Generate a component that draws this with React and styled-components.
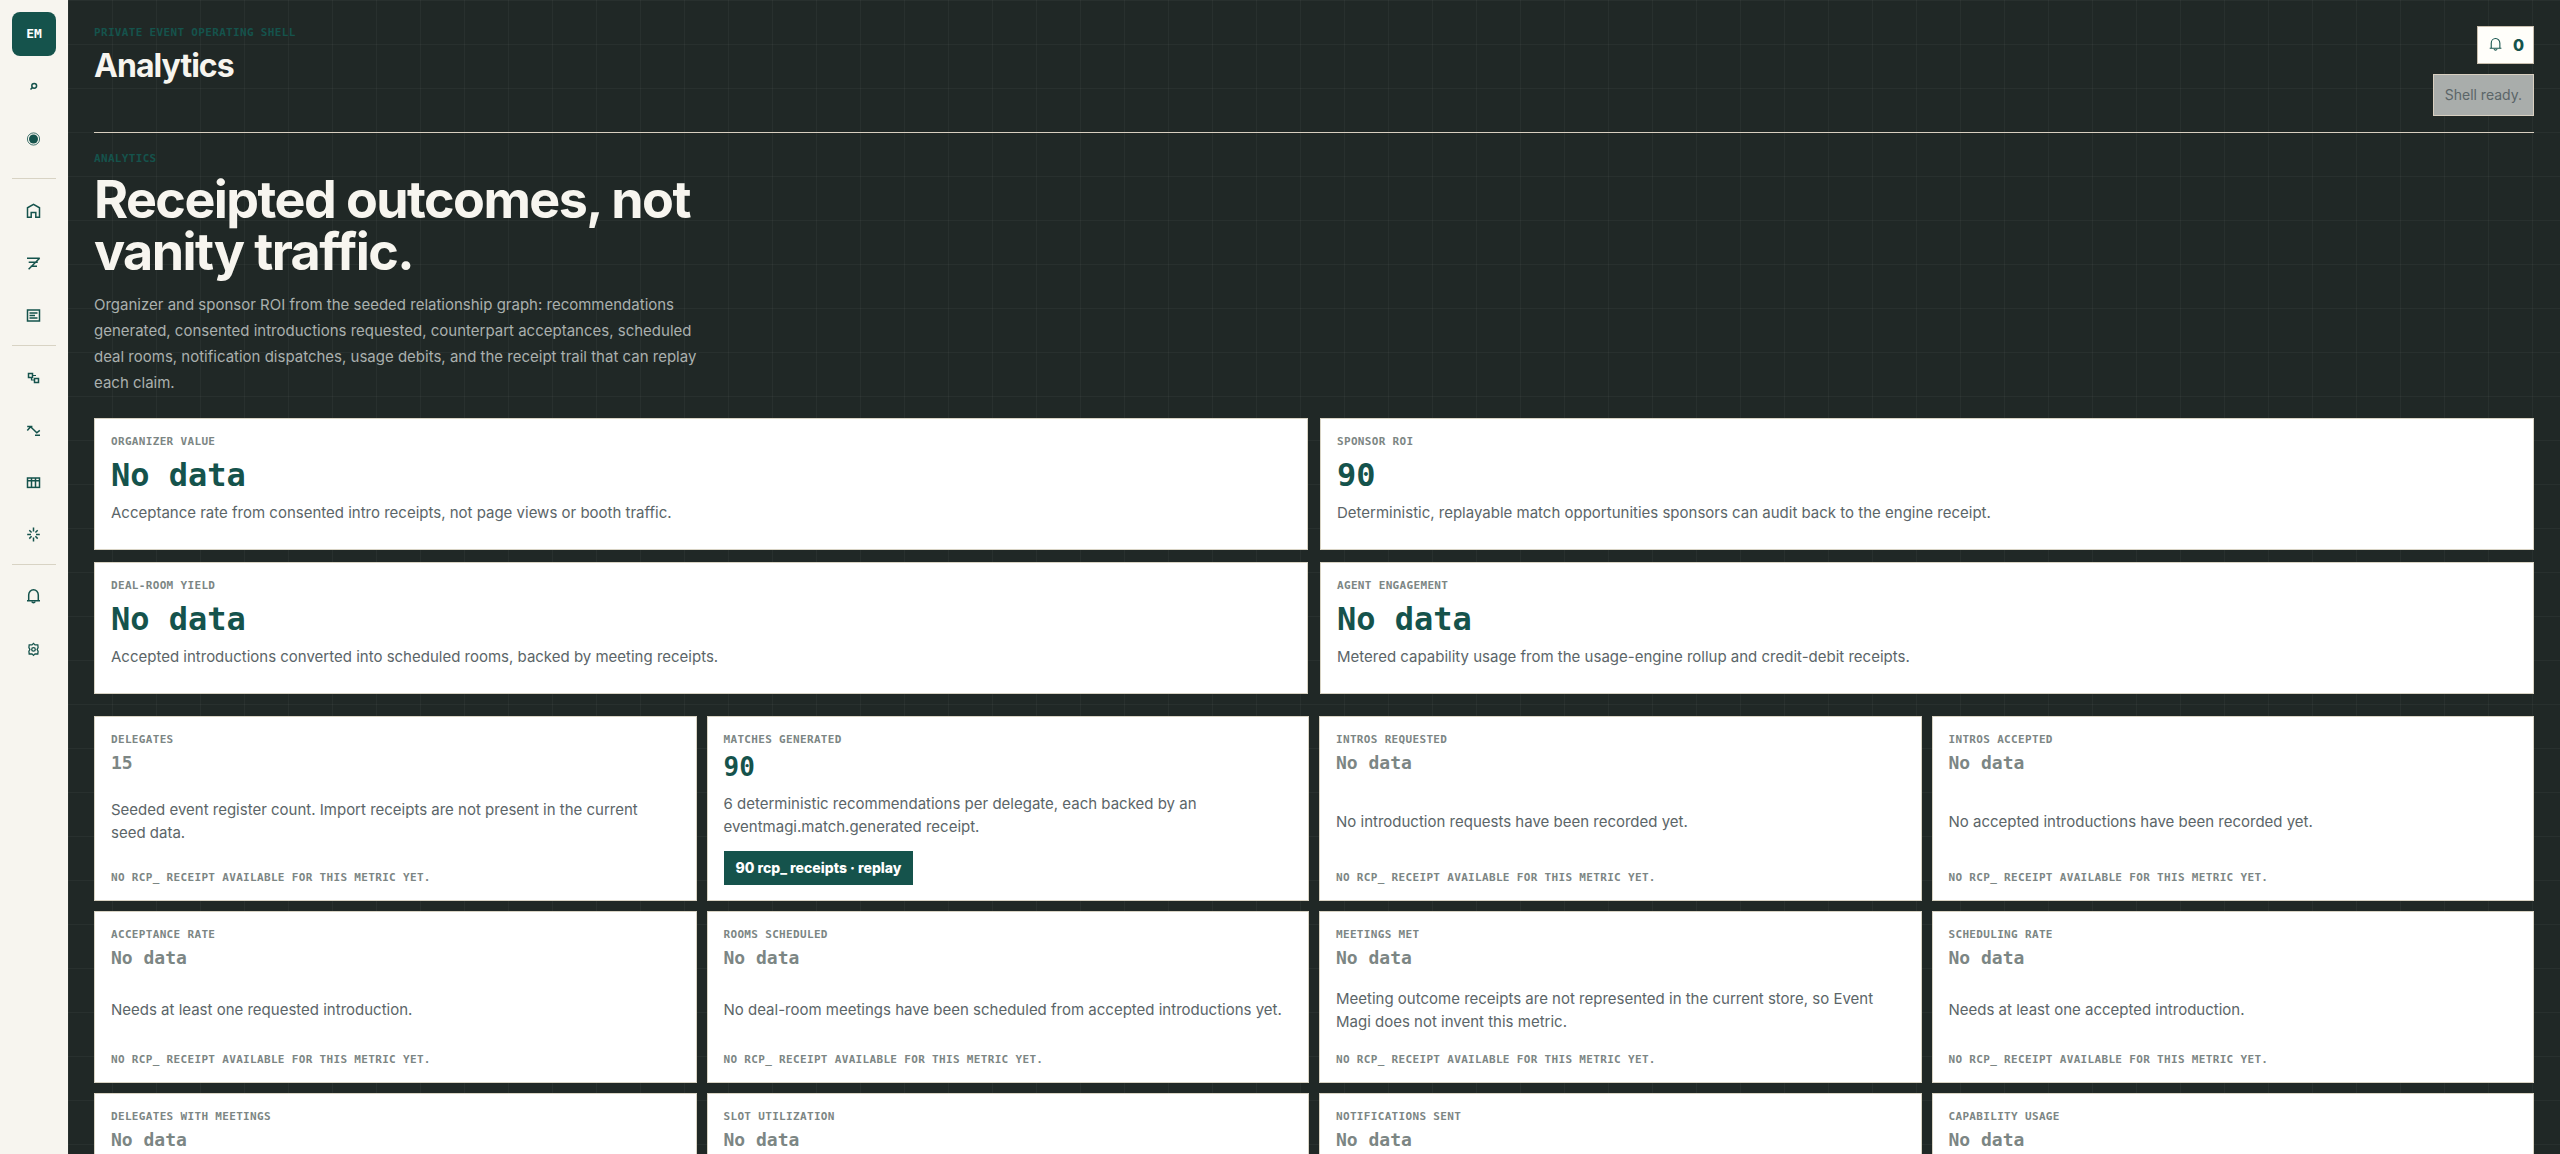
import React from "react";
import styled, { createGlobalStyle } from "styled-components";

const GlobalStyle = createGlobalStyle`
  * {
    box-sizing: border-box;
  }
  body {
    margin: 0;
    background: #202826;
    font-family: Inter, "Liberation Sans", sans-serif;
  }
  h1, h2, h3, p {
    margin: 0;
  }
`;

const navGroups = [
  [
    { label: "Search", icon: "search" },
    { label: "Status", icon: "status" },
  ],
  [
    { label: "Home", icon: "home" },
    { label: "Flow", icon: "flow" },
    { label: "Register", icon: "list" },
  ],
  [
    { label: "Graph", icon: "graph" },
    { label: "Matches", icon: "wave" },
    { label: "Rooms", icon: "table" },
    { label: "Agents", icon: "burst" },
  ],
  [
    { label: "Notifications", icon: "bell" },
    { label: "Settings", icon: "gear" },
  ],
];

const highlights = [
  {
    label: "Organizer value",
    value: "No data",
    text: "Acceptance rate from consented intro receipts, not page views or booth traffic.",
  },
  {
    label: "Sponsor ROI",
    value: "90",
    text: "Deterministic, replayable match opportunities sponsors can audit back to the engine receipt.",
  },
  {
    label: "Deal-room yield",
    value: "No data",
    text: "Accepted introductions converted into scheduled rooms, backed by meeting receipts.",
  },
  {
    label: "Agent engagement",
    value: "No data",
    text: "Metered capability usage from the usage-engine rollup and credit-debit receipts.",
  },
];

const metrics = [
  {
    label: "Delegates",
    value: "15",
    text: "Seeded event register count. Import receipts are not present in the current seed data.",
  },
  {
    label: "Matches generated",
    value: "90",
    text: "6 deterministic recommendations per delegate, each backed by an eventmagi.match.generated receipt.",
    receipts: "90 rcp_ receipts · replay",
  },
  {
    label: "Intros requested",
    value: "No data",
    text: "No introduction requests have been recorded yet.",
  },
  {
    label: "Intros accepted",
    value: "No data",
    text: "No accepted introductions have been recorded yet.",
  },
  {
    label: "Acceptance rate",
    value: "No data",
    text: "Needs at least one requested introduction.",
  },
  {
    label: "Rooms scheduled",
    value: "No data",
    text: "No deal-room meetings have been scheduled from accepted introductions yet.",
  },
  {
    label: "Meetings met",
    value: "No data",
    text: "Meeting outcome receipts are not represented in the current store, so Event Magi does not invent this metric.",
  },
  {
    label: "Scheduling rate",
    value: "No data",
    text: "Needs at least one accepted introduction.",
  },
  { label: "Delegates with meetings", value: "No data" },
  { label: "Slot utilization", value: "No data" },
  { label: "Notifications sent", value: "No data" },
  { label: "Capability usage", value: "No data" },
];

const icons = {
  search: (
    <>
      <circle cx="10.2" cy="9.8" r="2.4" />
      <path d="M8.4 11.6 6.5 13.5" />
    </>
  ),
  status: (
    <>
      <circle cx="9.5" cy="11" r="6.1" strokeWidth="0.8" />
      <circle cx="9.5" cy="11" r="4.5" fill="currentColor" stroke="none" />
    </>
  ),
  home: <path d="M3.5 16.3V6.8l6-3.5 6 3.5v9.5h-3.7v-4.8H7.2v4.8z" />,
  flow: <path d="M3 5.3h12.8M4.7 9.2h9M6.7 13.2H13M15.6 5.3 4.6 16.3" />,
  list: (
    <>
      <rect x="3.5" y="5" width="12" height="11" />
      <path d="M5.5 8h8M5.5 10.5h5.5M5.5 13h8" />
    </>
  ),
  graph: (
    <>
      <rect x="4.5" y="5.5" width="4" height="4" />
      <rect x="10.5" y="10.5" width="4" height="4" />
      <path d="M8.5 7.5h3.5M7.5 9.5v2.5h3" strokeWidth="1.2" />
    </>
  ),
  wave: <path d="M3.2 6.4h5.2M3.3 10.6 6.6 6.8l6.2 6 3-2.4M11 15.2h5" />,
  table: (
    <>
      <rect x="3.5" y="6" width="12" height="9.4" />
      <path d="M3.5 8.8h12M7.5 6v9.4M11.5 6v9.4" />
    </>
  ),
  burst: (
    <path d="M9.5 3.4v4M9.5 13.4v4M3.2 10.4h3.8M12 10.4h3.8M5.3 6.2l2.3 2.3M11.4 12.3l2.3 2.3M13.7 6.2l-2.3 2.3M7.6 12.3l-2.3 2.3" />
  ),
  bell: (
    <>
      <path d="M3 13.7h13M4.7 13.7V8a4.8 5.2 0 0 1 9.6 0v5.7" />
      <path d="M7.8 14.6a1.8 1.6 0 0 0 3.4 0" />
    </>
  ),
  gear: (
    <>
      <path
        d="M9.5 4.4 11 5.9l2.8-.1.3 2.7-1 1.9 1 1.9-.3 2.7-2.8-.1-1.5 1.5L8 14.9l-2.8.1-.3-2.7 1-1.9-1-1.9.3-2.7 2.8.1z"
        strokeWidth="1.3"
      />
      <circle cx="9.5" cy="10.4" r="1.8" strokeWidth="1.3" />
    </>
  ),
};

function Icon({ name, size = 20, weight = 1.5 }) {
  return (
    <svg
      width={size}
      height={size}
      viewBox="0 0 20 20"
      fill="none"
      stroke="currentColor"
      strokeWidth={weight}
      aria-hidden="true"
    >
      {icons[name]}
    </svg>
  );
}

function MetricCard({ item }) {
  return (
    <Metric>
      <Label>{item.label}</Label>
      <MetricValue $backed={Boolean(item.receipts)}>{item.value}</MetricValue>
      {item.text && <MetricText>{item.text}</MetricText>}
      {item.receipts && (
        <ReplayButton type="button">{item.receipts}</ReplayButton>
      )}
      {item.text && !item.receipts && (
        <Footnote>No rcp_ receipt available for this metric yet.</Footnote>
      )}
    </Metric>
  );
}

export default function App() {
  return (
    <Shell>
      <GlobalStyle />
      <Sidebar aria-label="Main">
        <Logo href="#home">EM</Logo>
        {navGroups.map((group, i) => (
          <NavGroup key={i}>
            {group.map((item) => (
              <NavLink key={item.icon} href={"#" + item.icon} aria-label={item.label}>
                <Icon name={item.icon} />
              </NavLink>
            ))}
          </NavGroup>
        ))}
      </Sidebar>
      <Main>
        <Header>
          <div>
            <Eyebrow>Private event operating shell</Eyebrow>
            <Title>Analytics</Title>
          </div>
          <HeaderActions>
            <BellButton type="button" aria-label="0 notifications">
              <Icon name="bell" size={18} weight={1.2} />
              <span>0</span>
            </BellButton>
            <Status role="status">Shell ready.</Status>
          </HeaderActions>
        </Header>
        <Intro>
          <Eyebrow>Analytics</Eyebrow>
          <Headline>Receipted outcomes, not vanity traffic.</Headline>
          <Lead>
            Organizer and sponsor ROI from the seeded relationship graph:
            recommendations generated, consented introductions requested,
            counterpart acceptances, scheduled deal rooms, notification
            dispatches, usage debits, and the receipt trail that can replay each
            claim.
          </Lead>
        </Intro>
        <HighlightGrid>
          {highlights.map((item) => (
            <Highlight key={item.label}>
              <Label>{item.label}</Label>
              <HighlightValue>{item.value}</HighlightValue>
              <Text>{item.text}</Text>
            </Highlight>
          ))}
        </HighlightGrid>
        <MetricGrid>
          {metrics.map((item) => (
            <MetricCard key={item.label} item={item} />
          ))}
        </MetricGrid>
      </Main>
    </Shell>
  );
}

const mono = `"DejaVu Sans Mono", "Liberation Mono", monospace`;

const Shell = styled.div`
  display: flex;
  height: 100vh;
`;

const Sidebar = styled.nav`
  flex: 0 0 68px;
  display: flex;
  flex-direction: column;
  gap: 8px;
  padding: 12px;
  background: #f7f5ef;
`;

const Logo = styled.a`
  display: flex;
  align-items: center;
  justify-content: center;
  height: 44px;
  border-radius: 8px;
  background: #15534c;
  color: #fff;
  font: 700 13px/16px ${mono};
  text-decoration: none;
`;

const NavGroup = styled.div`
  display: flex;
  flex-direction: column;
  gap: 8px;
  & + & {
    padding-top: 10px;
    border-top: 1px solid #d8d3c4;
  }
  &:nth-child(2) {
    padding-bottom: 10px;
  }
`;

const NavLink = styled.a`
  display: flex;
  align-items: center;
  justify-content: center;
  height: 44px;
  color: #15534c;
`;

const Main = styled.main`
  flex: 1;
  min-width: 0;
  padding: 26px;
  overflow-y: auto;
  scrollbar-width: none;
  background-color: #202826;
  background-image: linear-gradient(rgba(255, 255, 255, 0.035) 1px, transparent 1px),
    linear-gradient(90deg, rgba(255, 255, 255, 0.035) 1px, transparent 1px);
  background-size: 44px 44px;
`;

const Header = styled.header`
  display: flex;
  justify-content: space-between;
  padding-bottom: 16px;
  border-bottom: 1px solid #d8cfc0;
`;

const Eyebrow = styled.p`
  color: #15534c;
  font: 700 11px/14px ${mono};
  letter-spacing: 0.03em;
  text-transform: uppercase;
`;

const Title = styled.h1`
  margin-top: 6px;
  color: #f7f5ef;
  font-size: 32px;
  line-height: 40px;
  font-weight: 700;
  letter-spacing: -0.03em;
`;

const HeaderActions = styled.div`
  display: flex;
  flex-direction: column;
  align-items: flex-end;
  gap: 10px;
`;

const BellButton = styled.button`
  display: flex;
  align-items: center;
  gap: 8px;
  height: 38px;
  padding: 0 9px;
  border: 1px solid #c9bfae;
  background: #fffefa;
  color: #15534c;
  font: 800 16px/20px Inter, sans-serif;
`;

const Status = styled.div`
  padding: 10px 11px;
  border: 1px solid #d8cfc0;
  background: #a9adab;
  color: #5b6568;
  font-size: 14px;
  line-height: 20px;
`;

const Intro = styled.section`
  max-width: 620px;
  padding: 19px 0 22px;
`;

const Headline = styled.h2`
  margin-top: 8px;
  color: #f7f5ef;
  font-size: 52px;
  line-height: 52px;
  font-weight: 700;
  letter-spacing: -0.03em;
`;

const Lead = styled.p`
  margin-top: 14px;
  color: #aab0ae;
  font-size: 15px;
  line-height: 26px;
`;

const Card = styled.article`
  display: flex;
  flex-direction: column;
  align-items: flex-start;
  padding: 16px 16px 15px;
  border: 1px solid #d8d3c4;
  background: #fff;
`;

const HighlightGrid = styled.section`
  display: grid;
  grid-template-columns: repeat(2, minmax(0, 1fr));
  gap: 12px;
`;

const Highlight = styled(Card)`
  gap: 10px;
  min-height: 132px;
`;

const MetricGrid = styled.section`
  display: grid;
  grid-template-columns: repeat(4, minmax(0, 1fr));
  gap: 10px;
  margin-top: 22px;
`;

const Metric = styled(Card)`
  min-height: 172px;
`;

const Label = styled.h3`
  color: #7c8684;
  font: 700 11px/14px ${mono};
  letter-spacing: 0.03em;
  text-transform: uppercase;
`;

const HighlightValue = styled.p`
  color: #15534c;
  font: 700 32px/32px ${mono};
`;

const MetricValue = styled.p`
  margin-top: 7px;
  color: ${({ $backed }) => ($backed ? "#15534c" : "#7c8684")};
  font: 700 ${({ $backed }) => ($backed ? "26px/26px" : "18px/18px")} ${mono};
`;

const Text = styled.p`
  color: #5b6568;
  font-size: 15px;
  line-height: 23px;
`;

const MetricText = styled(Text)`
  flex: 1;
  display: flex;
  align-items: center;
  max-width: 562px;
  margin: 12px 0 13px;
`;

const Footnote = styled.p`
  color: #7c8684;
  font: 700 11px/14px ${mono};
  letter-spacing: 0.03em;
  text-transform: uppercase;
`;

const ReplayButton = styled.button`
  height: 34px;
  padding: 0 12px;
  border: 0;
  background: #15534c;
  color: #fff;
  font: 800 14px/20px Inter, sans-serif;
`;
